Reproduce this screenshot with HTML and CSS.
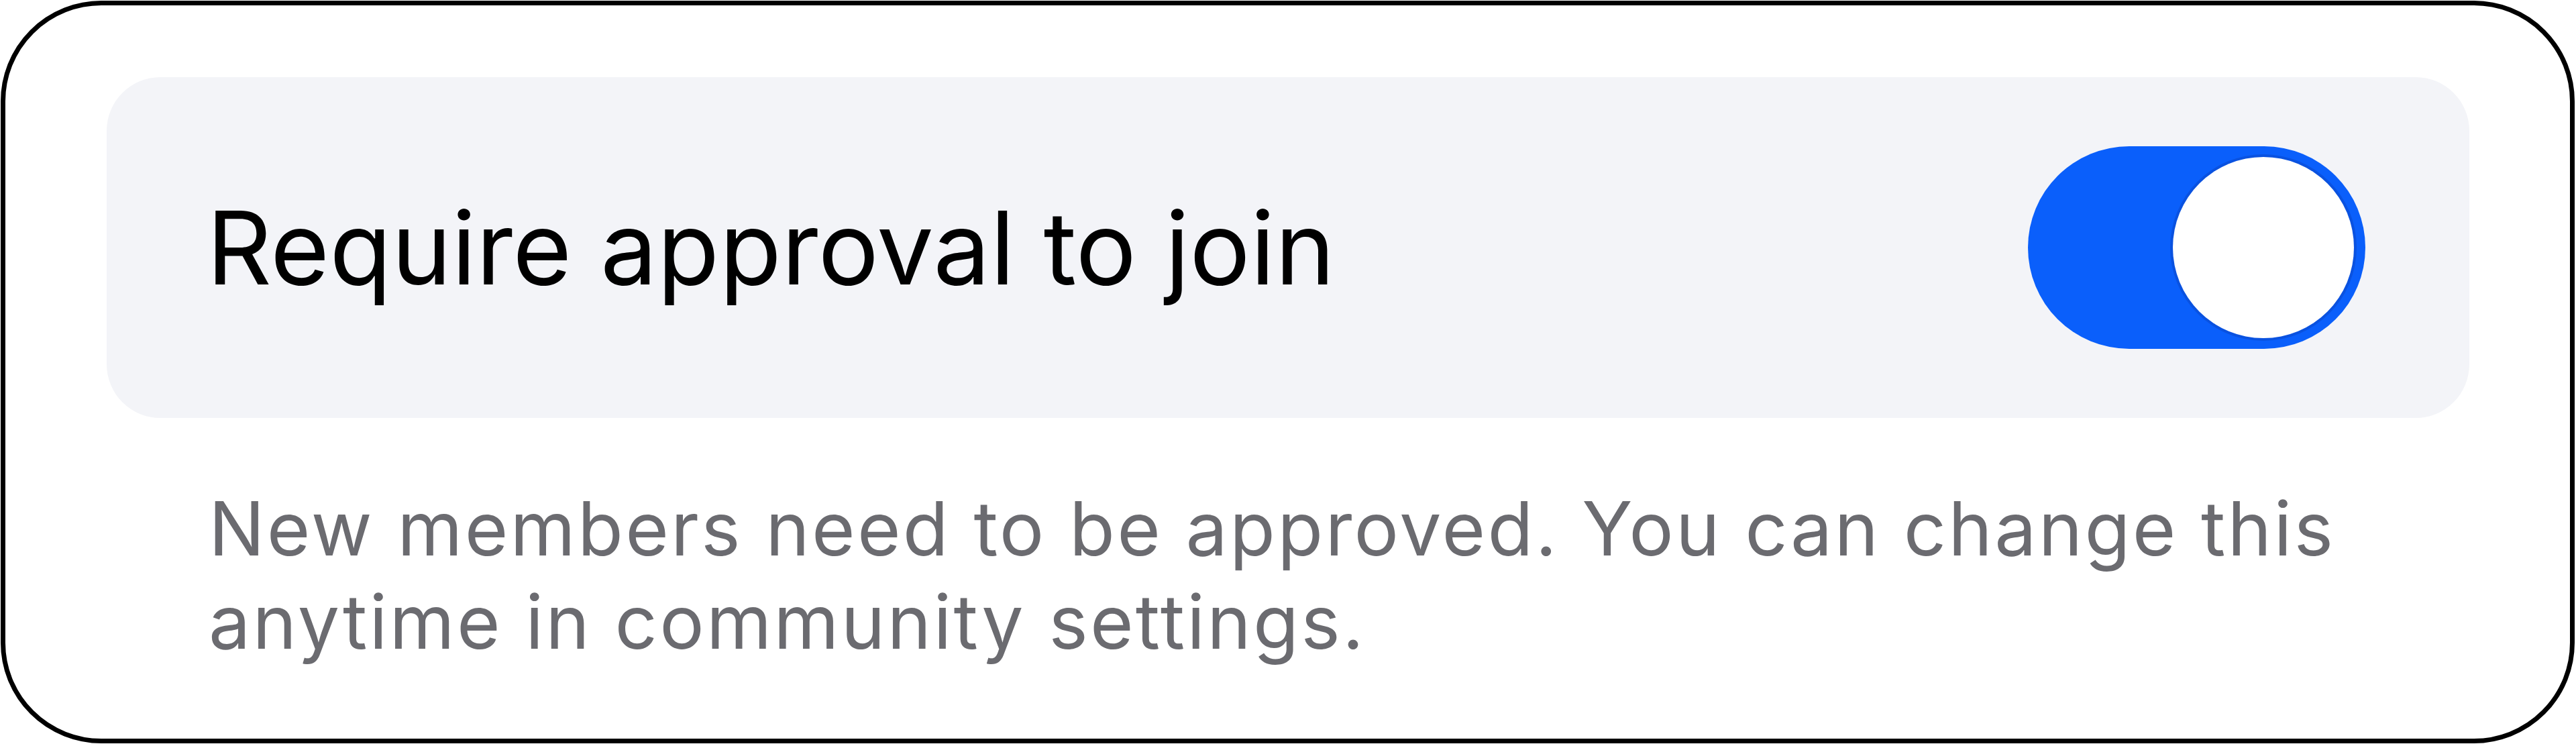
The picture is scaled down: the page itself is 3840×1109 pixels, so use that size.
FILE: index.html
```html
<!DOCTYPE html>
<html lang="en">
<head>
<meta charset="utf-8">
<title>Require approval to join</title>
<link rel="stylesheet" href="styles.css">
</head>
<body>
<div class="frame">
  <div class="card">
    <div class="label">Require approval to join</div>
    <div class="toggle" role="switch" aria-checked="true">
      <div class="knob"></div>
    </div>
  </div>
  <p class="note">New members need to be approved. You can change this anytime in community settings.</p>
</div>
</body>
</html>
```

FILE: styles.css
```css
html, body {
  margin: 0;
  padding: 0;
  background: #ffffff;
}
body {
  font-family: Inter, "Noto Sans", "Liberation Sans", sans-serif;
}
.frame {
  box-sizing: border-box;
  margin: 1px 0 0 1px;
  width: 3837px;
  height: 1107px;
  border: 7px solid #000;
  border-radius: 150px;
  padding: 107px 150px 0 151px;
  background: #fff;
}
.card {
  box-sizing: border-box;
  height: 508px;
  background: #f3f4f8;
  border-radius: 80px;
  display: flex;
  align-items: center;
  justify-content: space-between;
  padding: 0 155px 0 149px;
}
.label {
  font-size: 151px;
  line-height: 1;
  color: #000;
  letter-spacing: 0.1px;
}
.toggle {
  box-sizing: border-box;
  width: 503px;
  height: 302px;
  border-radius: 151px;
  background: #0a5ffb;
  display: flex;
  justify-content: flex-end;
  align-items: center;
  padding: 0 17px 0 0;
}
.knob {
  width: 270px;
  height: 270px;
  border-radius: 50%;
  background: #fff;
  box-shadow: 0 0 0 4px #0a52e0;
}
.note {
  margin: 95px 0 0 0;
  padding-left: 152px;
  font-size: 111px;
  line-height: 139px;
  color: #6b6b70;
  letter-spacing: 3.2px;
  max-width: 3360px;
}
```
